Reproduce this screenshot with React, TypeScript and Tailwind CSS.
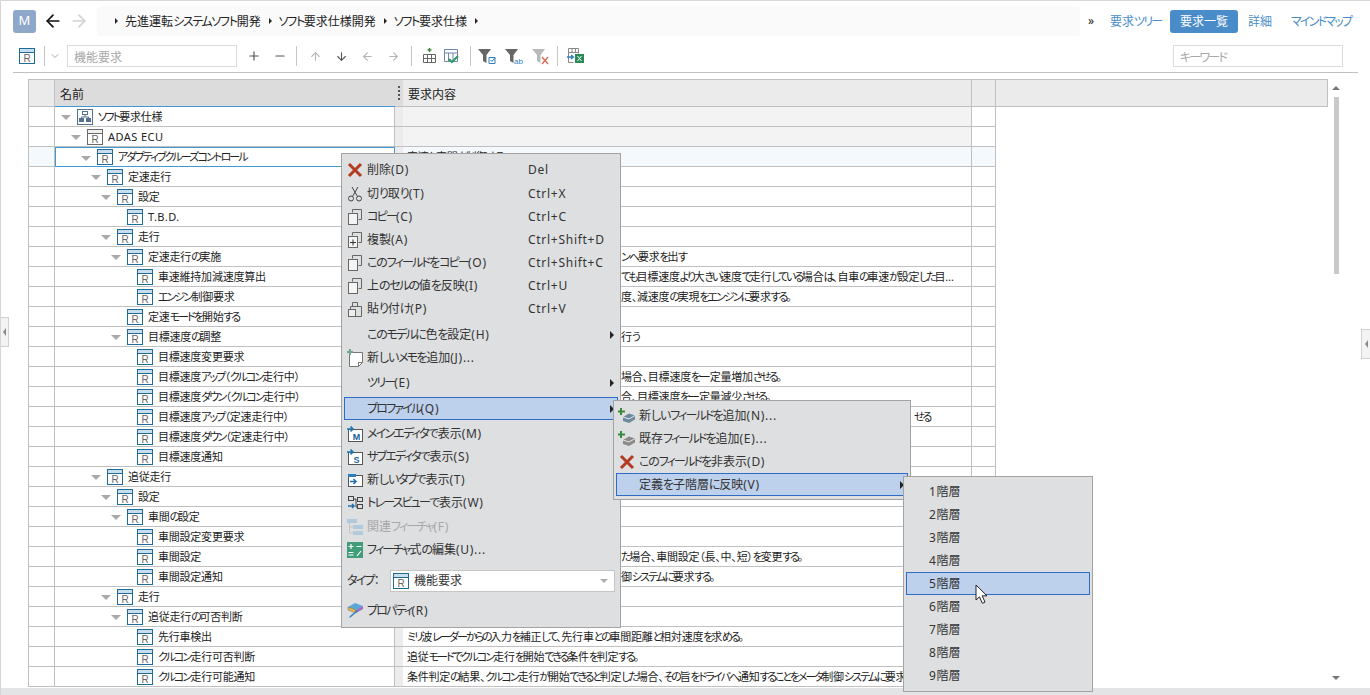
import { ArrowDown, ArrowLeft, ArrowRight, ArrowUp, ChevronDown, Minus, Plus } from 'lucide-react'
import type { ReactNode } from 'react'

type TreeRow = { name: string; level: number; leaf?: boolean; text?: string; textClass?: string; icon?: 'root' | 'gray' }

const rows: TreeRow[] = [
  { name: 'ソフト要求仕様', level: 0, icon: 'root' },
  { name: 'ADAS ECU', level: 1, icon: 'gray' },
  { name: 'アダプティブクルーズコントロール', level: 2, text: '車速と車間を制御する' },
  { name: '定速走行', level: 3 },
  { name: '設定', level: 4 },
  { name: 'T.B.D.', level: 5, leaf: true },
  { name: '走行', level: 4 },
  { name: '定速走行の実施', level: 5, text: 'ンへ要求を出す', textClass: 'pl-[218px]' },
  { name: '車速維持加減速度算出', level: 6, leaf: true, text: 'ても目標速度より大きい速度で走行している場合は、自車の車速が設定した目…', textClass: 'pl-[218px]' },
  { name: 'エンジン制御要求', level: 6, leaf: true, text: '度、減速度の実現をエンジンに要求する。', textClass: 'pl-[218px]' },
  { name: '定速モードを開始する', level: 5, leaf: true },
  { name: '目標速度の調整', level: 5, text: '行う', textClass: 'pl-[218px]' },
  { name: '目標速度変更要求', level: 6, leaf: true },
  { name: '目標速度アップ（クルコン走行中）', level: 6, leaf: true, text: '場合、目標速度を一定量増加させる。', textClass: 'pl-[218px]' },
  { name: '目標速度ダウン（クルコン走行中）', level: 6, leaf: true, text: '合、目標速度を一定量減少させる。', textClass: 'pl-[218px]' },
  { name: '目標速度アップ（定速走行中）', level: 6, leaf: true, text: 'せる', textClass: 'pl-[511px]' },
  { name: '目標速度ダウン（定速走行中）', level: 6, leaf: true },
  { name: '目標速度通知', level: 6, leaf: true },
  { name: '追従走行', level: 3 },
  { name: '設定', level: 4 },
  { name: '車間の設定', level: 5 },
  { name: '車間設定変更要求', level: 6, leaf: true },
  { name: '車間設定', level: 6, leaf: true, text: 'た場合、車間設定（長、中、短）を変更する。', textClass: 'pl-[218px]' },
  { name: '車間設定通知', level: 6, leaf: true, text: '御システムに要求する。', textClass: 'pl-[218px]' },
  { name: '走行', level: 4 },
  { name: '追従走行の可否判断', level: 5 },
  { name: '先行車検出', level: 6, leaf: true, text: 'ミリ波レーダーからの入力を補正して、先行車との車間距離と相対速度を求める。' },
  { name: 'クルコン走行可否判断', level: 6, leaf: true, text: '追従モードでクルコン走行を開始できる条件を判定する。' },
  { name: 'クルコン走行可能通知', level: 6, leaf: true, text: '条件判定の結果、クルコン走行が開始できると判定した場合、その旨をドライバへ通知することをメータ制御システムに要求する。' },
]

const indentClass = ['pl-[6px]', 'pl-[16px]', 'pl-[25px]', 'pl-[36px]', 'pl-[46px]', 'pl-[56px]', 'pl-[66px]']

// the reference font has narrow kana and wide latin, so each run gets its own tracking
const tracking = {
  table: { kata: 'tracking-[-0.17em]', hira: 'tracking-[-0.2em]', latin: 'tracking-[0.04em]', kanji: 'tracking-[-0.02em]' },
  menu: { kata: 'tracking-[-0.15em]', hira: 'tracking-[-0.1em]', latin: 'tracking-[0.06em]', kanji: '' },
  crumb: { kata: 'tracking-[-0.11em]', hira: 'tracking-[-0.1em]', latin: 'tracking-[0.06em]', kanji: '' },
}

function Jp({ text, kind = 'menu' }: { text: string; kind?: keyof typeof tracking }) {
  const t = tracking[kind]
  const parts = text.split(/([ァ-ヶー]+|[ぁ-ん]+|[A-Za-z0-9().+ ]+)/).filter(Boolean)
  return (
    <>
      {parts.map((p, i) => {
        if (/^[ァ-ヶー]/.test(p)) return <span key={i} className={t.kata}>{p}</span>
        if (/^[ぁ-ん]/.test(p)) return <span key={i} className={t.hira}>{p}</span>
        if (/^[A-Za-z0-9().+ ]/.test(p)) return <span key={i} className={t.latin}>{p}</span>
        return <span key={i} className={t.kanji}>{p}</span>
      })}
    </>
  )
}

function RIcon({ color = '#1f6b99', band = '#c9deec' }: { color?: string; band?: string }) {
  return (
    <svg width="16" height="16" viewBox="0 0 16 16" className="shrink-0">
      <rect x="0.5" y="0.5" width="15" height="15" fill="#fff" stroke={color} />
      <rect x="1" y="1" width="14" height="3" fill={band} />
      <line x1="1" y1="4.5" x2="15" y2="4.5" stroke={color} />
      <text x="8" y="14" fontSize="10" textAnchor="middle" fill="#666" fontFamily="Liberation Sans">R</text>
    </svg>
  )
}

function RootIcon() {
  return (
    <svg width="16" height="16" viewBox="0 0 16 16" className="shrink-0">
      <rect x="0.5" y="0.5" width="15" height="15" fill="#fff" stroke="#54708f" />
      <rect x="5.5" y="2.5" width="5" height="3" fill="#fff" stroke="#54708f" />
      <rect x="2.5" y="9.5" width="4" height="3" fill="#54708f" stroke="#54708f" />
      <rect x="9.5" y="9.5" width="4" height="3" fill="#54708f" stroke="#54708f" />
      <path d="M8 6v2M4.5 9V8h7v1" fill="none" stroke="#54708f" />
    </svg>
  )
}

function Caret() {
  return <span className="w-0 h-0 shrink-0 border-l-[5px] border-r-[5px] border-t-[5px] border-l-transparent border-r-transparent border-t-[#a9a9a9] mt-[2px]" />
}

function Row({ row, selected }: { row: TreeRow; selected: boolean }) {
  return (
    <div className={selected ? 'flex h-[20px] w-[968px] bg-[#f3f9fc]' : 'flex h-[20px] w-[968px] bg-white'}>
      <div className="w-[27px] border-l border-r border-b border-[#c0c0c0]" />
      <div className={`w-[340px] flex items-center border-r ${selected ? 'border border-[#3f97d3] bg-white' : 'border-b border-[#c0c0c0]'} ${indentClass[row.level]}`}>
        {row.leaf ? <span className="w-[10px]" /> : <Caret />}
        <span className="ml-[6px]">{row.icon === 'root' ? <RootIcon /> : row.icon === 'gray' ? <RIcon color="#6a6a6a" band="#f0f0f0" /> : <RIcon />}</span>
        <span className="ml-[5px] pt-[1px] whitespace-nowrap"><Jp text={row.name} kind="table" /></span>
      </div>
      <div className="w-[8px] bg-[#ececec] border-b border-[#c0c0c0]" />
      <div className={`w-[569px] flex items-center border-b border-r border-[#c0c0c0] pl-[4px] pt-[1px] overflow-hidden whitespace-nowrap ${row.level < 2 ? 'bg-[#f3f3f3]' : ''} ${row.textClass ?? ''}`}>
        {row.text ? <span><Jp text={row.text} kind="table" /></span> : null}
      </div>
      <div className="w-[24px] border-b border-r border-[#c0c0c0]" />
    </div>
  )
}

function IconCopy({ plus }: { plus?: boolean }) {
  return (
    <svg width="16" height="16" viewBox="0 0 16 16">
      <path d="M5.5 3.500V0.500h9v10h-3" fill="none" stroke="#666" />
      <rect x="1.500" y="4.500" width="9" height="11" fill="#f4f4f4" stroke="#666" />
      {plus ? <path d="M6 7.500v6M3 10.500h6" stroke="#333" /> : null}
    </svg>
  )
}

function IconX({ size = 16 }: { size?: number }) {
  return (
    <svg width={size} height={size} viewBox="0 0 16 16">
      <path d="M2 2l12 12M14 2L2 14" stroke="#b23b22" strokeWidth="3" />
    </svg>
  )
}

function IconScissors() {
  return (
    <svg width="16" height="16" viewBox="0 0 16 16" fill="none" stroke="#444">
      <circle cx="4" cy="12.500" r="2.500" />
      <circle cx="12" cy="12.500" r="2.500" />
      <path d="M5.500 10.500L11 1M10.500 10.500L5 1" />
    </svg>
  )
}

function IconPaste() {
  return (
    <svg width="16" height="16" viewBox="0 0 16 16" fill="none" stroke="#666">
      <path d="M5.500 5V1.500h5V5M3.500 5.500h11v10h-11z" />
      <rect x="1.500" y="8.500" width="7" height="7" fill="#eee" />
    </svg>
  )
}

function IconMemo() {
  return (
    <svg width="16" height="18" viewBox="0 0 16 18">
      <path d="M2.500 3.500h13v10l-4 4h-9z" fill="#fff" stroke="#777" />
      <path d="M11.500 17.500v-4h4" fill="none" stroke="#777" />
      <path d="M3 0v6M0 3h6" stroke="#6fa58f" strokeWidth="2" />
    </svg>
  )
}

function IconEditor({ letter }: { letter: string }) {
  return (
    <svg width="16" height="16" viewBox="0 0 16 16">
      <rect x="1.500" y="3.500" width="14" height="12" fill="#fff" stroke="#555" />
      <path d="M0 3h5M3.500 0.500l2.500 2.500l-2.500 2.500" fill="none" stroke="#1f77b4" strokeWidth="1.600" />
      <text x="9.500" y="14" fontSize="9" fontWeight="700" textAnchor="middle" fill="#1f5f96" fontFamily="Liberation Sans">{letter}</text>
    </svg>
  )
}

function IconTab() {
  return (
    <svg width="16" height="16" viewBox="0 0 16 16">
      <rect x="1.500" y="3.500" width="14" height="11" fill="#fff" stroke="#555" />
      <rect x="1" y="2" width="8" height="3" fill="#2f7fbf" />
      <path d="M3 9.500h6M6.500 7l2.500 2.500l-2.500 2.500" fill="none" stroke="#1f6fb0" strokeWidth="1.500" />
    </svg>
  )
}

function IconTrace() {
  return (
    <svg width="16" height="16" viewBox="0 0 16 16" fill="none" stroke="#444">
      <rect x="1.500" y="1.500" width="5" height="4" />
      <rect x="10.500" y="2.500" width="5" height="4" />
      <rect x="10.500" y="9.500" width="5" height="4" />
      <path d="M7 4h2v8h1" />
      <path d="M1 11h6M5 9l2 2l-2 2" stroke="#1f6fb0" strokeWidth="1.500" />
    </svg>
  )
}

function IconRelated() {
  return (
    <svg width="16" height="16" viewBox="0 0 16 16">
      <rect x="0" y="0" width="10" height="4" fill="#b3c9dc" />
      <rect x="6" y="6" width="10" height="4" fill="#b3c9dc" />
      <rect x="6" y="12" width="10" height="4" fill="#b3c9dc" />
      <path d="M2.500 4v10H6M2.500 8H6" fill="none" stroke="#c5c5c5" />
    </svg>
  )
}

function IconFormula() {
  return (
    <svg width="16" height="16" viewBox="0 0 16 16">
      <rect width="16" height="16" fill="#3f9d78" />
      <path d="M4 2v5M1.500 4.500h5M9.500 4.500h5M1.500 10.500h5M1.500 13h5M10 14l4-5" stroke="#fff" strokeWidth="1.200" />
    </svg>
  )
}

function IconProperty() {
  return (
    <svg width="17" height="17" viewBox="0 0 17 17">
      <path d="M1 5l7-4l8 3l-7 4z" fill="#5aa7d8" />
      <path d="M1 5l8 3v3L1 8z" fill="#e8b94a" stroke="#666" strokeWidth="0.500" />
      <path d="M9 8l7-4v3l-7 4z" fill="#9a6cc4" />
      <path d="M11 9l-7 6l-2 1l1-2l7-6z" fill="#2f7fbf" />
    </svg>
  )
}

function IconField({ tone }: { tone: string }) {
  return (
    <svg width="18" height="17" viewBox="0 0 18 17">
      <path d="M3 1v7M0 4.500h7" stroke="#3b8a3b" strokeWidth="2" />
      <path d="M5 10l6-3.500l6 2v4l-6 3.500l-6-2z" fill={tone} />
      <path d="M5 10l6 2l6-3.500" fill="none" stroke="#e6e6e6" />
    </svg>
  )
}

function MenuItem({ icon, label, shortcut, arrow, active, disabled, gap, labelWidth = 'w-[161px]' }: { icon?: ReactNode; label: string; shortcut?: string; arrow?: boolean; active?: boolean; disabled?: boolean; gap?: string; labelWidth?: string }) {
  return (
    <div className={`mx-[2px] h-[23px] flex items-center border ${active ? 'bg-[#bdd0ec] border-[#2f6cc5]' : 'border-transparent'} ${gap ?? ''} ${disabled ? 'text-[#a8a8a8]' : 'text-[#333]'}`}>
      <span className="w-[22px] shrink-0 flex justify-center pr-[2px]">{icon}</span>
      <span className={`${labelWidth} shrink-0 whitespace-nowrap`}><Jp text={label} /></span>
      {shortcut ? <span className="whitespace-nowrap"><Jp text={shortcut} /></span> : null}
      {arrow ? <span className="ml-auto mr-[3px] w-0 h-0 border-t-[4px] border-b-[4px] border-l-[4px] border-t-transparent border-b-transparent border-l-[#222]" /> : null}
    </div>
  )
}

function Sep({ className = '' }: { className?: string }) {
  return <span className={`w-px h-[20px] bg-[#c4c4c4] shrink-0 ${className}`} />
}

function Crumb({ label }: { label?: string }) {
  return (
    <>
      <span className="w-0 h-0 border-t-[3px] border-b-[3px] border-l-[3px] border-t-transparent border-b-transparent border-l-[#222]" />
      {label ? <span className="ml-[7px] mr-[8px] pt-[1px] whitespace-nowrap"><Jp text={label} kind="crumb" /></span> : null}
    </>
  )
}

function Funnel({ tone, children }: { tone: string; children?: ReactNode }) {
  return (
    <svg width="18" height="17" viewBox="0 0 18 17">
      <path d="M0 1h13L8.500 7v8L5 13V7z" fill={tone} />
      {children}
    </svg>
  )
}

export default function App() {
  return (
    <div className="relative w-[1370px] h-[695px] overflow-hidden bg-white border-l border-t border-[#d6d6d6] flex flex-col text-[11px] text-[#222] font-['Noto_Sans','Noto_Sans_CJK_JP',sans-serif] [font-feature-settings:'palt']">
      {/* top bar */}
      <div className="flex items-center h-[30px] mt-[5px] shrink-0 pl-[12px]">
        <div className="w-[23px] h-[23px] rounded-[3px] bg-[#8fa7c9] text-white text-[13px] flex items-center justify-center">M</div>
        <ArrowLeft size={20} strokeWidth={2} className="ml-[7px] text-[#111]" />
        <ArrowRight size={20} strokeWidth={2} className="ml-[6px] text-[#d2d2d2]" />
        <div className="ml-[8px] w-[983px] h-[30px] rounded-[4px] bg-[#fafafa] flex items-center pl-[18px] text-[12px]">
          <Crumb label="先進運転システムソフト開発" />
          <Crumb label="ソフト要求仕様開発" />
          <Crumb label="ソフト要求仕様" />
          <Crumb />
        </div>
        <span className="ml-[8px] w-[22px] text-[12px]">»</span>
        <div className="flex items-center text-[12px] text-[#4a8cc9]">
          <span className="w-[60px] pt-[1px] whitespace-nowrap"><Jp text="要求ツリー" /></span>
          <span className="w-[68px] h-[23px] pt-[1px] rounded-[3px] bg-[#4a8cc9] text-white flex items-center justify-center">要求一覧</span>
          <span className="ml-[10px] pt-[1px] w-[43px]">詳細</span>
          <span className="pt-[1px] whitespace-nowrap"><Jp text="マインドマップ" /></span>
        </div>
      </div>

      {/* toolbar */}
      <div className="flex items-center h-[22px] mt-[9px] shrink-0 pl-[18px] text-[#555]">
        <span className="flex w-[17px]"><RIcon /></span>
        <Sep className="ml-[8px]" />
        <ChevronDown size={12} className="ml-[4px] text-[#aaa]" />
        <div className="ml-[6px] w-[170px] h-[22px] border border-[#dcdcdc] flex items-center pl-[6px] pt-[3px] text-[12px] text-[#a8a8a8]">機能要求</div>
        <Plus size={14} strokeWidth={2} className="ml-[10px]" />
        <Minus size={14} strokeWidth={2} className="ml-[12px]" />
        <Sep className="ml-[9px]" />
        <ArrowUp size={13} className="ml-[12px] text-[#b5b5b5]" />
        <ArrowDown size={13} className="ml-[13px] text-[#555]" />
        <ArrowLeft size={13} className="ml-[13px] text-[#b5b5b5]" />
        <ArrowRight size={13} className="ml-[13px] text-[#b5b5b5]" />
        <Sep className="ml-[11px]" />
        <svg width="15" height="16" viewBox="0 0 15 16" className="ml-[10px]" fill="none" stroke="#666">
          <path d="M7.500 0v4M5.500 2h4" stroke="#3b8a3b" strokeWidth="1.500" />
          <path d="M1.500 6.500h12v8h-12zM1.500 10.500h12M5.500 6.500v8M9.500 6.500v8" />
        </svg>
        <svg width="16" height="16" viewBox="0 0 16 16" className="ml-[6px]" fill="none" stroke="#6d88a8">
          <path d="M1.500 1.500h13v12h-13zM1.500 5h13M5.500 5v8M10 5v8" />
          <path d="M6 11l3 3l6-6" stroke="#2f9a62" strokeWidth="2" />
        </svg>
        <Sep className="ml-[11px]" />
        <span className="ml-[7px] flex"><Funnel tone="#666"><path d="M11 9.500h6v6h-6zM12.500 12l1.500 1.500l3-4" fill="#fff" stroke="#2f7fbf" /></Funnel></span>
        <span className="ml-[9px] flex"><Funnel tone="#666"><text x="9" y="15.500" fontSize="8" fill="#2f7fbf" fontFamily="Liberation Sans">ab</text></Funnel></span>
        <span className="ml-[9px] flex"><Funnel tone="#b9b9b9"><path d="M10 9l6 7M16 9l-6 7" stroke="#d9705a" strokeWidth="1.500" /></Funnel></span>
        <Sep className="ml-[7px]" />
        <svg width="18" height="16" viewBox="0 0 18 16" className="ml-[9px]" fill="none">
          <path d="M1.500 0.500h10v5M1.500 0.500v14h5M1.500 4.500h10M5 0.500v4M8.500 0.500v4" stroke="#888" />
          <path d="M0 9h6M4 7l2.500 2l-2.500 2" stroke="#2f7fbf" strokeWidth="1.300" />
          <rect x="8" y="6" width="9" height="9" fill="#2c8a57" />
          <path d="M10.500 8l4 5M14.500 8l-4 5" stroke="#fff" />
        </svg>
        <div className="ml-[588px] w-[170px] h-[22px] border border-[#dcdcdc] flex items-center pl-[6px] pt-[3px] text-[12px] text-[#a8a8a8]"><Jp text="キーワード" /></div>
      </div>
      <div className="h-px bg-[#c0c0c0] ml-[12px] w-[1345px] mt-[5px] shrink-0" />

      {/* table */}
      <div className="flex mt-[6px] pl-[27px] shrink-0">
        <div>
          <div className="flex h-[28px] text-[12px]">
            <div className="w-[27px] bg-[#ebebeb] border-l border-t border-r border-b border-[#c0c0c0]" />
            <div className="w-[340px] bg-[#dcdcdc] border-t border-[#c0c0c0] border-b-[#3f97d3] border-b flex items-center pl-[5px] pt-[3px]">名前</div>
            <div className="w-[8px] bg-[#dcdcdc] border-t border-b border-[#c0c0c0] flex flex-col items-center justify-center gap-[2px] pr-[1px]">
              <span className="w-[2px] h-[2px] bg-[#555]" />
              <span className="w-[2px] h-[2px] bg-[#555]" />
              <span className="w-[2px] h-[2px] bg-[#555]" />
              <span className="w-[2px] h-[2px] bg-[#555]" />
            </div>
            <div className="w-[569px] bg-[#ebebeb] border-t border-b border-r border-[#c0c0c0] flex items-center pl-[5px] pt-[3px]">要求内容</div>
            <div className="w-[24px] bg-[#ebebeb] border-t border-b border-r border-[#c0c0c0]" />
            <div className="w-[332px] bg-[#ebebeb] border-t border-b border-r border-[#c0c0c0]" />
          </div>
          {rows.map((row, i) => <Row key={i} row={row} selected={i === 2} />)}
        </div>
        <div className="ml-[4px] w-[8px] flex flex-col items-center">
          <span className="mt-[7px] w-0 h-0 border-l-[4px] border-r-[4px] border-b-[4px] border-l-transparent border-r-transparent border-b-[#777]" />
          <span className="mt-[7px] w-[5px] h-[177px] bg-[#c9c9c9]" />
          <span className="mt-auto mb-[7px] w-0 h-0 border-l-[4px] border-r-[4px] border-t-[4px] border-l-transparent border-r-transparent border-t-[#777]" />
        </div>
      </div>

      {/* bottom band */}
      <div className="flex-1 mt-[1px] bg-[#e3e4e6]" />

      {/* side collapse tabs */}
      <div className="absolute left-0 top-[316px] w-[8px] h-[30px] bg-[#f3f3f3] border border-l-0 border-[#d0d0d0] flex items-center justify-center">
        <span className="w-0 h-0 border-t-[4px] border-b-[4px] border-r-[3px] border-t-transparent border-b-transparent border-r-[#888]" />
      </div>
      <div className="absolute left-[1360px] top-[328px] w-[9px] h-[30px] bg-[#f3f3f3] border border-r-0 border-[#d0d0d0] flex items-center justify-center">
        <span className="w-0 h-0 border-t-[4px] border-b-[4px] border-r-[3px] border-t-transparent border-b-transparent border-r-[#888]" />
      </div>

      {/* context menu */}
      <div className="absolute left-[340px] top-[152px] w-[280px] h-[475px] bg-[#dedfe1] border border-[#a3a3a3] pt-[4px] text-[12px]">
        <MenuItem icon={<IconX />} label="削除(D)" shortcut="Del" />
        <MenuItem gap="mt-[1px]" icon={<IconScissors />} label="切り取り(T)" shortcut="Ctrl+X" />
        <MenuItem icon={<IconCopy />} label="コピー(C)" shortcut="Ctrl+C" />
        <MenuItem icon={<IconCopy plus />} label="複製(A)" shortcut="Ctrl+Shift+D" />
        <MenuItem icon={<IconCopy />} label="このフィールドをコピー(O)" shortcut="Ctrl+Shift+C" />
        <MenuItem icon={<IconCopy />} label="上のセルの値を反映(I)" shortcut="Ctrl+U" />
        <MenuItem icon={<IconPaste />} label="貼り付け(P)" shortcut="Ctrl+V" />
        <MenuItem gap="mt-[3px]" label="このモデルに色を設定(H)" arrow />
        <MenuItem icon={<IconMemo />} label="新しいメモを追加(J)..." />
        <MenuItem gap="mt-[2px]" label="ツリー(E)" arrow />
        <MenuItem gap="mt-[3px]" label="プロファイル(Q)" arrow active />
        <MenuItem gap="mt-[2px]" icon={<IconEditor letter="M" />} label="メインエディタで表示(M)" />
        <MenuItem icon={<IconEditor letter="S" />} label="サブエディタで表示(S)" />
        <MenuItem icon={<IconTab />} label="新しいタブで表示(T)" />
        <MenuItem icon={<IconTrace />} label="トレースビューで表示(W)" />
        <MenuItem gap="mt-[1px]" icon={<IconRelated />} label="関連フィーチャ(F)" disabled />
        <MenuItem icon={<IconFormula />} label="フィーチャ式の編集(U)..." />
        <div className="flex items-center mt-[9px] h-[22px] pl-[5px] text-[#333]">
          <span className="w-[43px] whitespace-nowrap"><Jp text="タイプ：" /></span>
          <div className="w-[225px] h-[22px] bg-white border border-[#c4c4c4] flex items-center pl-[2px]">
            <RIcon />
            <span className="ml-[5px]">機能要求</span>
            <span className="ml-auto mr-[6px] w-0 h-0 border-l-[4px] border-r-[4px] border-t-[4px] border-l-transparent border-r-transparent border-t-[#b0b0b0]" />
          </div>
        </div>
        <MenuItem gap="mt-[7px]" icon={<IconProperty />} label="プロパティ(R)" />
      </div>

      {/* profile submenu */}
      <div className="absolute left-[612px] top-[399px] w-[298px] h-[100px] bg-[#dedfe1] border border-[#a3a3a3] pt-[3px] text-[12px]">
        <MenuItem icon={<IconField tone="#6d8a9c" />} label="新しいフィールドを追加(N)..." labelWidth="" />
        <MenuItem icon={<IconField tone="#8a8a8a" />} label="既存フィールドを追加(E)..." labelWidth="" />
        <MenuItem icon={<IconX />} label="このフィールドを非表示(D)" labelWidth="" />
        <MenuItem label="定義を子階層に反映(V)" arrow active labelWidth="" />
      </div>

      {/* level submenu */}
      <div className="absolute left-[902px] top-[475px] w-[190px] h-[216px] bg-[#dedfe1] border border-[#a3a3a3] pt-[3px] text-[12px]">
        {['1階層', '2階層', '3階層', '4階層', '5階層', '6階層', '7階層', '8階層', '9階層'].map((l) => (
          <MenuItem key={l} label={l} active={l === '5階層'} labelWidth="" />
        ))}
      </div>

      {/* mouse cursor */}
      <svg width="14" height="21" viewBox="0 0 14 21" className="absolute left-[974px] top-[583px]">
        <path d="M1 1v15l3.500-3.200l2.800 6.500l2.700-1.200l-2.800-6.300h4.800z" fill="#fff" stroke="#222" />
      </svg>
    </div>
  )
}
